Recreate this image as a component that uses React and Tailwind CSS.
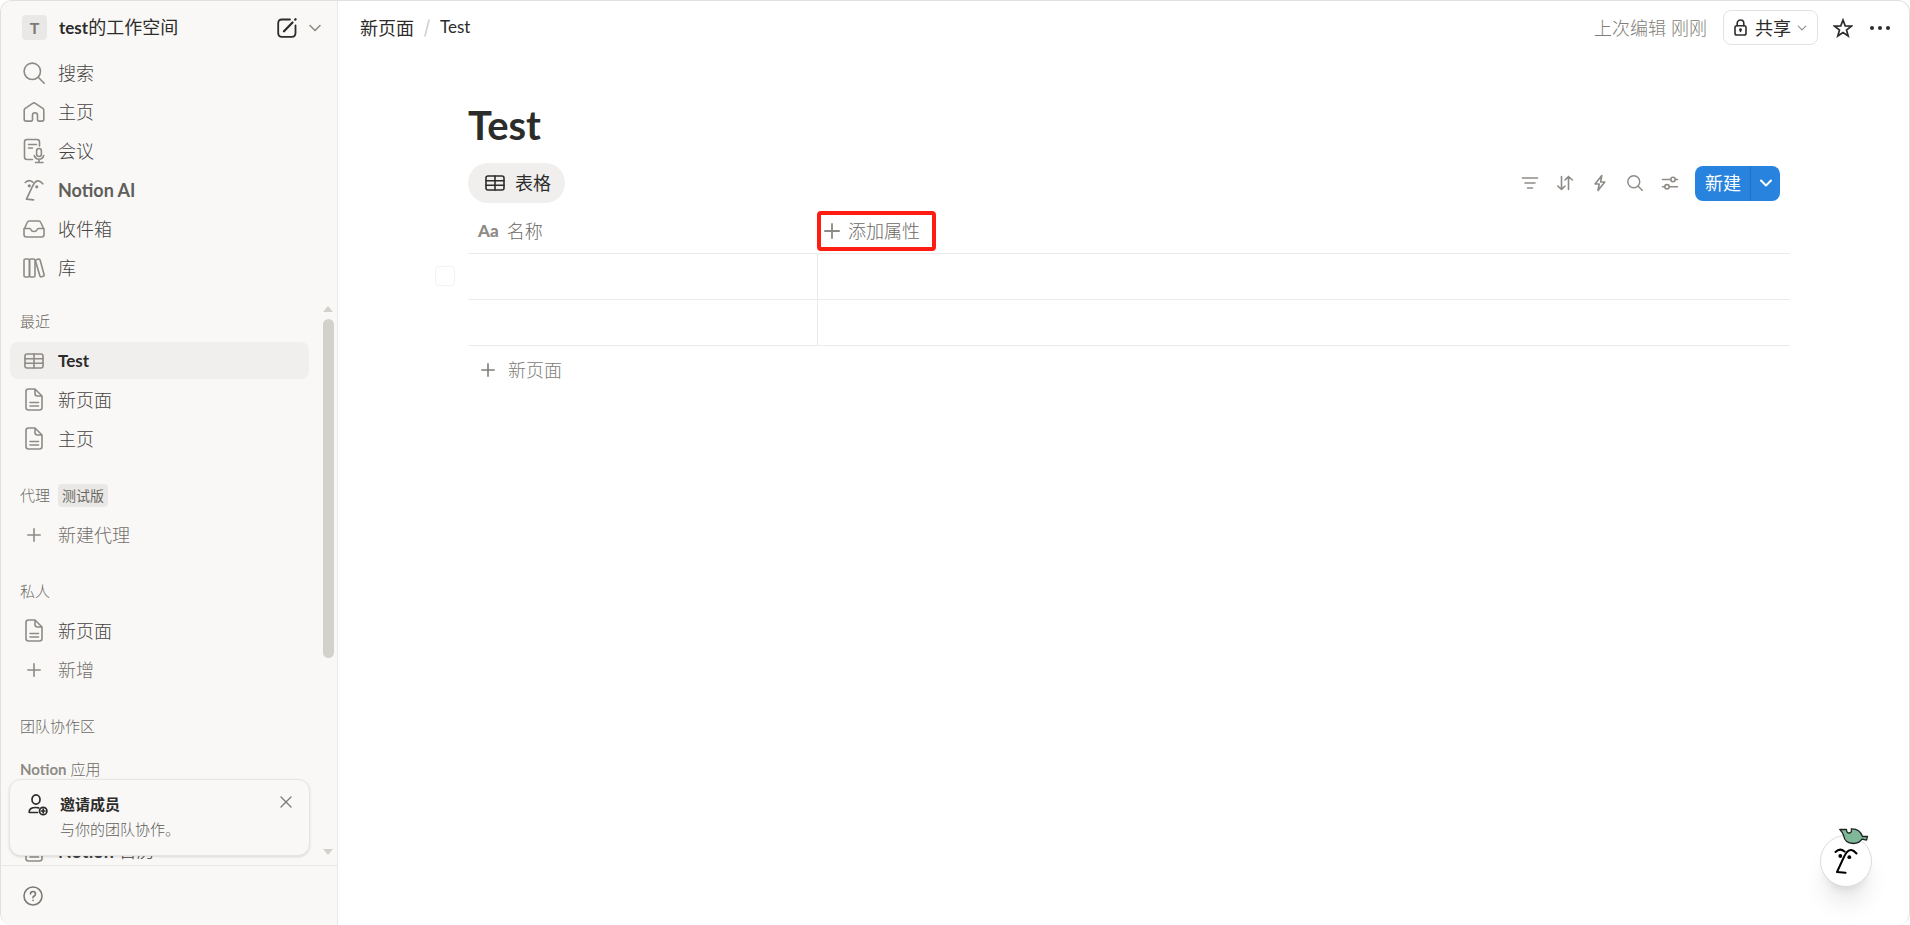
const icon = {
  fill: "none",
  stroke: "currentColor",
  strokeWidth: 1.6,
  strokeLinecap: "round",
  strokeLinejoin: "round",
  "aria-hidden": true,
};

function SearchIcon({ className = "size-[22px]" }) {
  return (
    <svg viewBox="0 0 22 22" className={className} {...icon}>
      <circle cx="9.3" cy="9.3" r="8.2" />
      <path d="M15.2 15.2l6 6" />
    </svg>
  );
}

function HomeIcon() {
  return (
    <svg viewBox="0 0 22 22" className="size-[22px]" {...icon}>
      <path d="M1.2 9.2q0-1.2 1-1.9l7.5-5q1.3-.9 2.6 0l7.5 5q1 .7 1 1.9v9q0 1.9-1.9 1.9h-3.4q-1 0-1-1v-4.800q0-2.500-2.500-2.500t-2.500 2.500v4.800q0 1-1 1H3.100q-1.900 0-1.900-1.900z" />
    </svg>
  );
}

function MeetingIcon() {
  return (
    <svg viewBox="0 0 22 26" className="h-[26px] w-[22px]" {...icon}>
      <path d="M9.500 21.500H4q-2.500 0-2.500-2.500V4Q1.500 1.500 4 1.500h10Q16.500 1.500 16.500 4v4M5.500 6.500h8M5.500 10h4" />
      <rect x="13.600" y="10.500" width="4.800" height="8" rx="2.400" />
      <path d="M11.300 17.500q1 3.700 4.700 3.700t4.700-3.700M16 21.200v3.300M12.500 24.500h7.500" />
    </svg>
  );
}

function FaceIcon({ className = "h-[22px] w-5" }) {
  return (
    <svg viewBox="0 0 24 26" className={className} {...icon} strokeWidth="2">
      <path d="M1.500 4Q6-.5 10.500 3.500M22.500 5.500Q17-1 12.500 4.500 10.500 7.500 9 11L3 24l8.500.8" />
      <circle cx="6.300" cy="8" r="1.900" fill="currentColor" stroke="none" />
      <circle cx="15.300" cy="9.200" r="1.900" fill="currentColor" stroke="none" />
    </svg>
  );
}

function InboxIcon() {
  return (
    <svg viewBox="0 0 22 18" className="h-[18px] w-[22px]" {...icon}>
      <path d="M1 9.500L4.200 2.500Q4.800 1 6.400 1h9.200q1.600 0 2.200 1.500L21 9.500V14.500q0 2.500-2.500 2.500h-15Q1 17 1 14.500zM1 8.500h5.500q1.200 0 1.500 1.200.6 1.800 3 1.800t3-1.800Q14.300 8.500 15.500 8.500H21" />
    </svg>
  );
}

function LibraryIcon() {
  return (
    <svg viewBox="0 0 22 20" className="h-5 w-[22px]" {...icon}>
      <rect x="1" y="1" width="5.500" height="18" rx="1.500" />
      <rect x="6.500" y="1" width="5.500" height="18" rx="1.500" />
      <path d="M13.500 1.700l2-.6q1.200-.3 1.600.9l4 14.800q.2 1.200-.9 1.500l-1.800.5q-1.200.3-1.500-.9L12.600 3.300q-.3-1.200.9-1.600z" />
    </svg>
  );
}

function TableIcon() {
  return (
    <svg viewBox="0 0 20 16" className="h-4 w-5" {...icon}>
      <rect x="1" y="1" width="18" height="14" rx="2" />
      <path d="M1 5.700h18M1 10.300h18M10 1v14" />
    </svg>
  );
}

function PageIcon() {
  return (
    <svg viewBox="0 0 18 23" className="h-[23px] w-[18px]" {...icon}>
      <path d="M10 1H3.500Q1 1 1 3.500v16Q1 22 3.500 22h11q2.500 0 2.500-2.500V8zv4.500Q10 8 12.500 8H17M5 14.500h8.500M5 18h8.500" />
    </svg>
  );
}

function PlusIcon({ className = "size-[14px]" }) {
  return (
    <svg viewBox="0 0 14 14" className={className} {...icon}>
      <path d="M7 .8v12.400M.8 7h12.400" />
    </svg>
  );
}

function ChevronIcon({ className }) {
  return (
    <svg viewBox="0 0 12 8" className={className} {...icon}>
      <path d="M1 1.500l5 5 5-5" />
    </svg>
  );
}

function ComposeIcon() {
  return (
    <svg viewBox="0 0 20 20" className="size-5" {...icon} strokeWidth="1.800">
      <path d="M13 1.500H5Q1.200 1.500 1.200 5.300V15q0 3.800 3.800 3.800h9.700q3.800 0 3.800-3.800V7.500" />
      <path d="M7 13.300L15.500 4.500M18.200 1.600l.4-.4" strokeWidth="2.200" />
    </svg>
  );
}

function InviteIcon() {
  return (
    <svg viewBox="0 0 20 22" className="h-[22px] w-5" {...icon} strokeWidth="1.700">
      <ellipse cx="8" cy="5.500" rx="4" ry="4.600" />
      <path d="M9.500 18.500H1.200q-.5-5 6.800-5 1.500 0 2.700.4" />
      <circle cx="15.200" cy="17" r="3.700" />
      <path d="M15.200 15.200v3.600M13.400 17h3.600" />
    </svg>
  );
}

function LockIcon() {
  return (
    <svg viewBox="0 0 13 17" className="h-[17px] w-[13px]" {...icon}>
      <rect x="1" y="6.800" width="11" height="9.200" rx="1.800" />
      <path d="M3.200 6.800V4.300a3.300 3.300 0 0 1 6.600 0v2.500M6.500 10.500v2" />
      <circle cx="6.500" cy="10.700" r=".6" fill="currentColor" />
    </svg>
  );
}

function StarIcon() {
  return (
    <svg viewBox="0 0 20 20" className="size-5" {...icon} strokeWidth="1.700" strokeLinejoin="miter">
      <path d="M10 2l2.200 5.900 6.200.2-4.900 3.900 1.700 6L10 14.500 4.800 18l1.700-6-4.900-3.900 6.200-.2z" />
    </svg>
  );
}

function FilterIcon() {
  return (
    <svg viewBox="0 0 18 18" className="size-[18px]" {...icon}>
      <path d="M1.500 4h15M4 9h10M6.500 14h5" />
    </svg>
  );
}

function SortIcon() {
  return (
    <svg viewBox="0 0 18 18" className="size-[18px]" {...icon}>
      <path d="M5.500 2.500v13M1.800 12l3.700 3.500L9 12M12.500 15.500v-13M9 6l3.500-3.500L16.300 6" />
    </svg>
  );
}

function BoltIcon() {
  return (
    <svg viewBox="0 0 18 18" className="size-[18px]" {...icon}>
      <path d="M10.800 1.500L4 10h4.200L7 16.500 13.800 8H9.600z" />
    </svg>
  );
}

function SlidersIcon() {
  return (
    <svg viewBox="0 0 18 18" className="size-[18px]" {...icon}>
      <path d="M1.500 5.500h8M14.500 5.500h2M1.500 12.800h2M8.500 12.800h8" />
      <circle cx="12" cy="5.500" r="2.200" />
      <circle cx="6" cy="12.800" r="2.200" />
    </svg>
  );
}

function NavRow({ icon: Icon, label, active, muted, strong }) {
  const tone = active
    ? "bg-[#f0efee] text-[17px] font-bold text-[#2c2c2b]"
    : muted
      ? "text-lg font-light text-[#73706b]"
      : strong
        ? "text-lg font-bold text-[#5f5e5b]"
        : "text-lg font-light text-[#454441]";

  return (
    <a
      href="#"
      className={`flex h-[37px] items-center gap-3 rounded-lg pr-2 pl-3 ${tone}`}
    >
      <span className="flex w-6 shrink-0 justify-center text-[#8e8b86]">
        <Icon />
      </span>
      <span>{label}</span>
    </a>
  );
}

function SectionLabel({ children }) {
  return (
    <h2 className="flex h-[37px] items-center gap-2 px-2.5 text-[15px] font-light text-[#6b6863]">
      {children}
    </h2>
  );
}

const mainNav = [
  { icon: SearchIcon, label: "搜索" },
  { icon: HomeIcon, label: "主页" },
  { icon: MeetingIcon, label: "会议" },
  { icon: FaceIcon, label: "Notion AI", strong: true },
  { icon: InboxIcon, label: "收件箱" },
  { icon: LibraryIcon, label: "库" },
];

function Sidebar() {
  return (
    <aside className="relative flex w-[337px] shrink-0 flex-col border-r border-[#e9e8e6] bg-[#f9f8f7] pl-px">
      <div className="flex h-[53px] shrink-0 items-center pr-4 pl-5 text-lg text-[#2c2c2b]">
        <span className="flex size-[25px] items-center justify-center rounded bg-[#e9e8e6] text-base font-bold text-[#7d7a75]">
          T
        </span>
        <span className="ml-3">
          <span className="text-[17px] font-bold">test</span>的工作空间
        </span>
        <button type="button" aria-label="新建页面" className="ml-auto">
          <ComposeIcon />
        </button>
        <button type="button" aria-label="切换工作空间" className="ml-3 text-[#8e8b86]">
          <ChevronIcon className="h-2 w-3" />
        </button>
      </div>

      <nav className="flex flex-col gap-0.5 px-2">
        {mainNav.map((item) => (
          <NavRow key={item.label} {...item} />
        ))}
      </nav>

      <div className="mt-3 flex min-h-0 flex-1 overflow-hidden">
        <div className="flex min-w-0 flex-1 flex-col gap-5 pt-[5px] pr-2.5 pl-2">
          <section className="flex flex-col gap-0.5">
            <SectionLabel>最近</SectionLabel>
            <NavRow icon={TableIcon} label="Test" active />
            <NavRow icon={PageIcon} label="新页面" />
            <NavRow icon={PageIcon} label="主页" />
          </section>
          <section className="flex flex-col gap-0.5">
            <SectionLabel>
              代理
              <span className="rounded bg-[#e9e8e6] px-1 text-sm leading-[23px] font-normal">
                测试版
              </span>
            </SectionLabel>
            <NavRow icon={PlusIcon} label="新建代理" muted />
          </section>
          <section className="flex flex-col gap-0.5">
            <SectionLabel>私人</SectionLabel>
            <NavRow icon={PageIcon} label="新页面" />
            <NavRow icon={PlusIcon} label="新增" muted />
          </section>
          <section>
            <SectionLabel>团队协作区</SectionLabel>
            <div className="mt-1.5 flex flex-col gap-11">
              <SectionLabel>
                <span>
                  <span className="font-bold text-[#8e8b86]">Notion</span> 应用
                </span>
              </SectionLabel>
              <NavRow
                icon={PageIcon}
                label={
                  <>
                    <span className="font-bold">Notion</span> 日历
                  </>
                }
              />
            </div>
          </section>
        </div>
        <div className="flex w-[18px] shrink-0 flex-col items-center justify-between pt-2 pb-2.5 text-[#d3d1cb]">
          <svg viewBox="0 0 10 6" className="h-1.5 w-2.5" fill="currentColor" aria-hidden="true">
            <path d="M5 0l5 6H0z" />
          </svg>
          <div className="mt-[7px] mb-auto h-[339px] w-[11px] rounded-full bg-[#d3d1cb]" />
          <svg viewBox="0 0 10 6" className="h-1.5 w-2.5" fill="currentColor" aria-hidden="true">
            <path d="M5 6l5-6H0z" />
          </svg>
        </div>
      </div>

      <div className="absolute bottom-[69px] left-2 flex h-[77px] w-[301px] rounded-xl border border-[#e6e5e3] bg-[#f9f8f7] pt-3.5 pl-[18px] text-[15px] shadow-sm">
        <span className="text-[#2c2c2b]">
          <InviteIcon />
        </span>
        <div className="ml-3 leading-[25px]">
          <p className="-mt-0.5 font-semibold text-[#2c2c2b]">邀请成员</p>
          <p className="font-light text-[#5f5e5b]">与你的团队协作。</p>
        </div>
        <button type="button" aria-label="关闭" className="mr-[17px] ml-auto h-4 text-[#7d7a75]">
          <svg viewBox="0 0 12 12" className="size-3" {...icon} strokeWidth="1.300">
            <path d="M1 1l10 10M11 1L1 11" />
          </svg>
        </button>
      </div>

      <div className="flex h-[60px] shrink-0 items-center border-t border-[#e9e8e6] pl-[21px]">
        <button type="button" aria-label="帮助" className="text-[#7d7a75]">
          <svg viewBox="0 0 20 20" className="size-5" {...icon}>
            <circle cx="10" cy="10" r="9" />
            <path d="M7.500 8q0-2.500 2.500-2.500T12.500 8q0 1.300-1.300 2-1.200.8-1.200 1.700M10 14.300v.1" />
          </svg>
        </button>
      </div>
    </aside>
  );
}

function TopBar() {
  return (
    <header className="flex h-[53px] items-center pr-[18px] pl-[22px] text-lg text-[#2c2c2b]">
      <nav className="flex items-center">
        <a href="#">新页面</a>
        <svg viewBox="0 0 6 18" className="mx-2.5 h-[18px] w-1.5 text-[#d3d1cb]" {...icon}>
          <path d="M5 1L1 17" />
        </svg>
        <a href="#" className="text-[17px]">
          Test
        </a>
      </nav>
      <span className="ml-auto font-light text-[#807d78]">上次编辑 刚刚</span>
      <button
        type="button"
        className="ml-4 flex h-[35px] items-center rounded-lg border border-[#e3e2e0] px-2.5"
      >
        <LockIcon />
        <span className="ml-2">共享</span>
        <ChevronIcon className="ml-1.5 h-1.5 w-2.5 text-[#91918e]" />
      </button>
      <button type="button" aria-label="收藏" className="ml-[15px]">
        <StarIcon />
      </button>
      <button type="button" aria-label="更多" className="ml-4">
        <svg viewBox="0 0 22 6" className="h-1.5 w-[22px]" fill="currentColor" aria-hidden="true">
          <circle cx="3" cy="3" r="2" />
          <circle cx="11" cy="3" r="2" />
          <circle cx="19" cy="3" r="2" />
        </svg>
      </button>
    </header>
  );
}

const tools = [
  { icon: FilterIcon, label: "筛选" },
  { icon: SortIcon, label: "排序" },
  { icon: BoltIcon, label: "自动化" },
  { icon: SearchIcon, label: "搜索" },
  { icon: SlidersIcon, label: "设置" },
];

function ViewBar() {
  return (
    <div className="flex h-10 items-center pr-2.5">
      <button
        type="button"
        className="flex h-10 items-center gap-2.5 rounded-full bg-[#f0efee] pr-3.5 pl-[17px] text-lg text-[#2c2c2b]"
      >
        <TableIcon />
        表格
      </button>
      <div className="ml-auto flex items-center gap-[17px] text-[#8e8b86]">
        {tools.map(({ icon: Icon, label }) => (
          <button key={label} type="button" aria-label={label}>
            <Icon className="size-[18px] stroke-2 p-px" />
          </button>
        ))}
      </div>
      <div className="ml-4 flex h-[35px] overflow-hidden rounded-lg bg-[#2783de] text-white">
        <button type="button" className="pr-[9px] pl-2.5 text-lg">
          新建
        </button>
        <button
          type="button"
          aria-label="更多新建选项"
          className="flex w-[30px] items-center justify-center border-l border-[#2272c3]"
        >
          <ChevronIcon className="h-2 w-3 stroke-2" />
        </button>
      </div>
    </div>
  );
}

function Database() {
  return (
    <div className="relative">
      <table className="w-full table-fixed text-left text-lg text-[#6b6863]">
        <thead>
          <tr className="h-[50px] border-b border-[#ecebea]">
            <th className="w-[349px] pt-1.5 pl-2.5 font-light">
              <span className="flex items-center gap-2">
                <span className="text-[17px] font-black text-[#8e8b86]">Aa</span>
                名称
              </span>
            </th>
            <th className="pt-1.5 font-light">
              <button
                type="button"
                className="flex h-10 items-center gap-2 rounded-sm border-4 border-[#ff1d12] pr-3 pl-[3px]"
              >
                <span className="text-[#8e8b86]">
                  <PlusIcon className="size-4" />
                </span>
                添加属性
              </button>
            </th>
          </tr>
        </thead>
        <tbody>
          <tr className="h-[46px] border-b border-[#ecebea]">
            <td className="border-r border-[#ecebea]" />
            <td />
          </tr>
          <tr className="h-[46px] border-b border-[#ecebea]">
            <td className="border-r border-[#ecebea]" />
            <td />
          </tr>
        </tbody>
      </table>
      <input
        type="checkbox"
        aria-label="选择行"
        className="absolute top-[63px] -left-[33px] size-5 appearance-none rounded border border-[#f4f3f2]"
      />
      <button
        type="button"
        className="flex h-12 items-center gap-3 pl-3 text-lg font-light text-[#807d78]"
      >
        <PlusIcon className="mx-px size-[14px]" />
        新页面
      </button>
    </div>
  );
}

function Assistant() {
  return (
    <button
      type="button"
      aria-label="Notion AI"
      className="absolute right-[37px] bottom-[38px] flex size-[52px] items-center justify-center rounded-full border border-[#dddcda] bg-white text-black shadow-xl"
    >
      <FaceIcon className="h-[26px] w-6" />
      <svg viewBox="0 0 30 17" className="absolute -top-2 left-[18px] h-[17px] w-[30px]" aria-hidden="true">
        <path
          d="M.8 1.500L7.500 1.500Q7.500 5 10.300 5 13 4.800 12.300 1 20.500.5 23.500 8.500L28.500 8.500 27.500 12.200 23 11.200Q20 15.500 14.500 15.500 5.500 15 4.800 8 3.500 4 .8 1.500z"
          fill="#7fb899"
          stroke="#222"
          strokeWidth="1.300"
          strokeLinejoin="round"
        />
      </svg>
    </button>
  );
}

export default function App() {
  return (
    <div className="relative flex h-screen overflow-hidden rounded-xl border border-b-0 border-[#e0e0e0] bg-white font-['Lato','Noto_Sans_CJK_SC',sans-serif]">
      <Sidebar />
      <main className="min-w-0 flex-1">
        <TopBar />
        <div className="mt-12 pr-[119px] pl-[130px]">
          <h1 className="text-[40px] leading-[46px] font-bold text-[#2c2c2b]">Test</h1>
          <div className="mt-[15px]">
            <ViewBar />
          </div>
          <Database />
        </div>
      </main>
      <Assistant />
    </div>
  );
}
